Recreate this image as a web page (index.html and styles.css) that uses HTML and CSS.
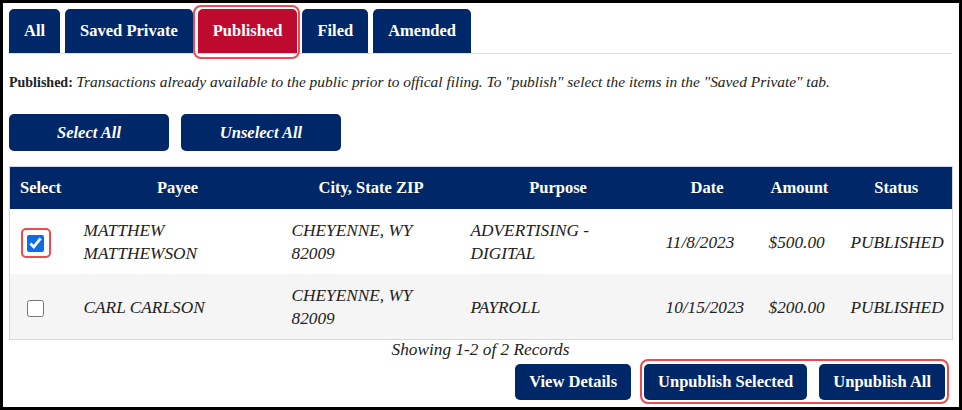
FILE: index.html
```html
<!DOCTYPE html>
<html lang="en">
<head>
<meta charset="utf-8">
<title>Published Transactions</title>
<link rel="stylesheet" href="styles.css">
</head>
<body>
<div class="frame">
  <nav class="tabs">
    <span class="tab">All</span>
    <span class="tab">Saved Private</span>
    <span class="tab tab-active">Published</span>
    <span class="tab">Filed</span>
    <span class="tab">Amended</span>
  </nav>

  <p class="desc"><strong>Published:</strong> <em>Transactions already available to the public prior to offical filing. To "publish" select the items in the "Saved Private" tab.</em></p>

  <div class="sel-actions">
    <button class="btn btn-wide">Select All</button>
    <button class="btn btn-wide">Unselect All</button>
  </div>

  <table class="grid">
    <colgroup>
      <col class="c-sel">
      <col class="c-payee">
      <col class="c-city">
      <col class="c-purpose">
      <col class="c-date">
      <col class="c-amount">
      <col class="c-status">
    </colgroup>
    <thead>
      <tr>
        <th class="left">Select</th>
        <th>Payee</th>
        <th>City, State ZIP</th>
        <th>Purpose</th>
        <th>Date</th>
        <th>Amount</th>
        <th>Status</th>
      </tr>
    </thead>
    <tbody>
      <tr>
        <td class="sel"><span class="mark mark-hl"><input type="checkbox" checked></span></td>
        <td>MATTHEW<br>MATTHEWSON</td>
        <td>CHEYENNE, WY<br>82009</td>
        <td>ADVERTISING -<br>DIGITAL</td>
        <td>11/8/2023</td>
        <td>$500.00</td>
        <td>PUBLISHED</td>
      </tr>
      <tr class="alt">
        <td class="sel"><span class="mark"><input type="checkbox"></span></td>
        <td>CARL CARLSON</td>
        <td>CHEYENNE, WY<br>82009</td>
        <td>PAYROLL</td>
        <td>10/15/2023</td>
        <td>$200.00</td>
        <td>PUBLISHED</td>
      </tr>
    </tbody>
  </table>

  <p class="count">Showing 1-2 of 2 Records</p>

  <div class="footer-actions">
    <button class="btn">View Details</button>
    <div class="hl-group">
      <button class="btn">Unpublish Selected</button>
      <button class="btn">Unpublish All</button>
    </div>
  </div>
</div>
</body>
</html>
```

FILE: styles.css
```css
html, body {
  margin: 0;
  padding: 0;
  background: #fff;
}

body {
  font-family: "Liberation Serif", "Times New Roman", serif;
  color: #222;
}

.frame {
  box-sizing: border-box;
  width: 962px;
  height: 410px;
  border: 3px solid #000;
  padding: 6px 7px 0 6px;
  overflow: hidden;
}

/* Tabs */
.tabs {
  display: flex;
  gap: 5px;
  border-bottom: 1px solid #dedede;
}

.tab {
  position: relative;
  height: 44px;
  padding: 0 15px;
  display: flex;
  align-items: center;
  background: #002868;
  color: #fff;
  font-weight: bold;
  font-size: 16.5px;
  border-radius: 5px 5px 0 0;
}

.tab-active {
  background: #bf0a30;
}

.tab-active::after {
  content: "";
  position: absolute;
  top: -4px;
  left: -5px;
  right: -3px;
  bottom: -6px;
  border: 2px solid #ec4a4e;
  border-radius: 8px;
}

/* Description */
.desc {
  margin: 18px 0 0;
  font-size: 14px;
  line-height: 20px;
  height: 20px;
  color: #222;
}

.desc strong {
  font-weight: bold;
}

.desc em {
  font-size: 15.4px;
}

/* Buttons */
.btn {
  background: #002868;
  color: #fff;
  border: 0;
  border-radius: 5px;
  font-family: inherit;
  font-weight: bold;
  font-size: 16.5px;
  height: 36px;
  padding: 0 14px;
  cursor: pointer;
}

.sel-actions {
  display: flex;
  gap: 12px;
  margin-top: 22px;
}

.btn-wide {
  width: 160px;
  height: 37px;
  padding: 0;
  font-style: italic;
  font-size: 16.5px;
}

/* Table */
.grid {
  margin-top: 15px;
  width: 943px;
  border-collapse: collapse;
  table-layout: fixed;
  border: 1px solid #d3d7de;
}

.c-sel { width: 64px; }
.c-payee { width: 208px; }
.c-city { width: 179px; }
.c-purpose { width: 195px; }
.c-date { width: 103px; }
.c-amount { width: 82px; }
.c-status { width: 112px; }

.grid th {
  background: #002868;
  color: #fff;
  height: 42px;
  padding: 0 10px;
  font-weight: bold;
  font-size: 16.5px;
  text-align: center;
}

.grid th.left {
  text-align: left;
}

.grid td {
  padding: 10px 10px 9px;
  font-style: italic;
  font-size: 17.3px;
  line-height: 23px;
  vertical-align: middle;
  text-align: left;
  color: #222;
  white-space: nowrap;
}

.grid tr.alt td {
  background: #f5f5f5;
}

.grid td.sel {
  padding-left: 17px;
}

.mark {
  position: relative;
  display: inline-block;
  line-height: 0;
  vertical-align: middle;
}

.mark input {
  width: 17px;
  height: 17px;
  margin: 0;
  accent-color: #0a6ee8;
}

.mark-hl::after {
  content: "";
  position: absolute;
  top: -7px;
  left: -6px;
  right: -7px;
  bottom: -6px;
  border: 2px solid #ec4a4e;
  border-radius: 5px;
}

/* Footer */
.count {
  margin: 0;
  text-align: center;
  font-style: italic;
  font-size: 17.3px;
  line-height: 20px;
}

.footer-actions {
  display: flex;
  justify-content: flex-end;
  gap: 13px;
  margin-top: 4px;
  padding-right: 7px;
}

.hl-group {
  position: relative;
  display: flex;
  gap: 12px;
}

.hl-group::after {
  content: "";
  position: absolute;
  top: -5px;
  left: -4px;
  right: -4px;
  bottom: -4px;
  border: 2px solid #ec4a4e;
  border-radius: 8px;
  pointer-events: none;
}
```
